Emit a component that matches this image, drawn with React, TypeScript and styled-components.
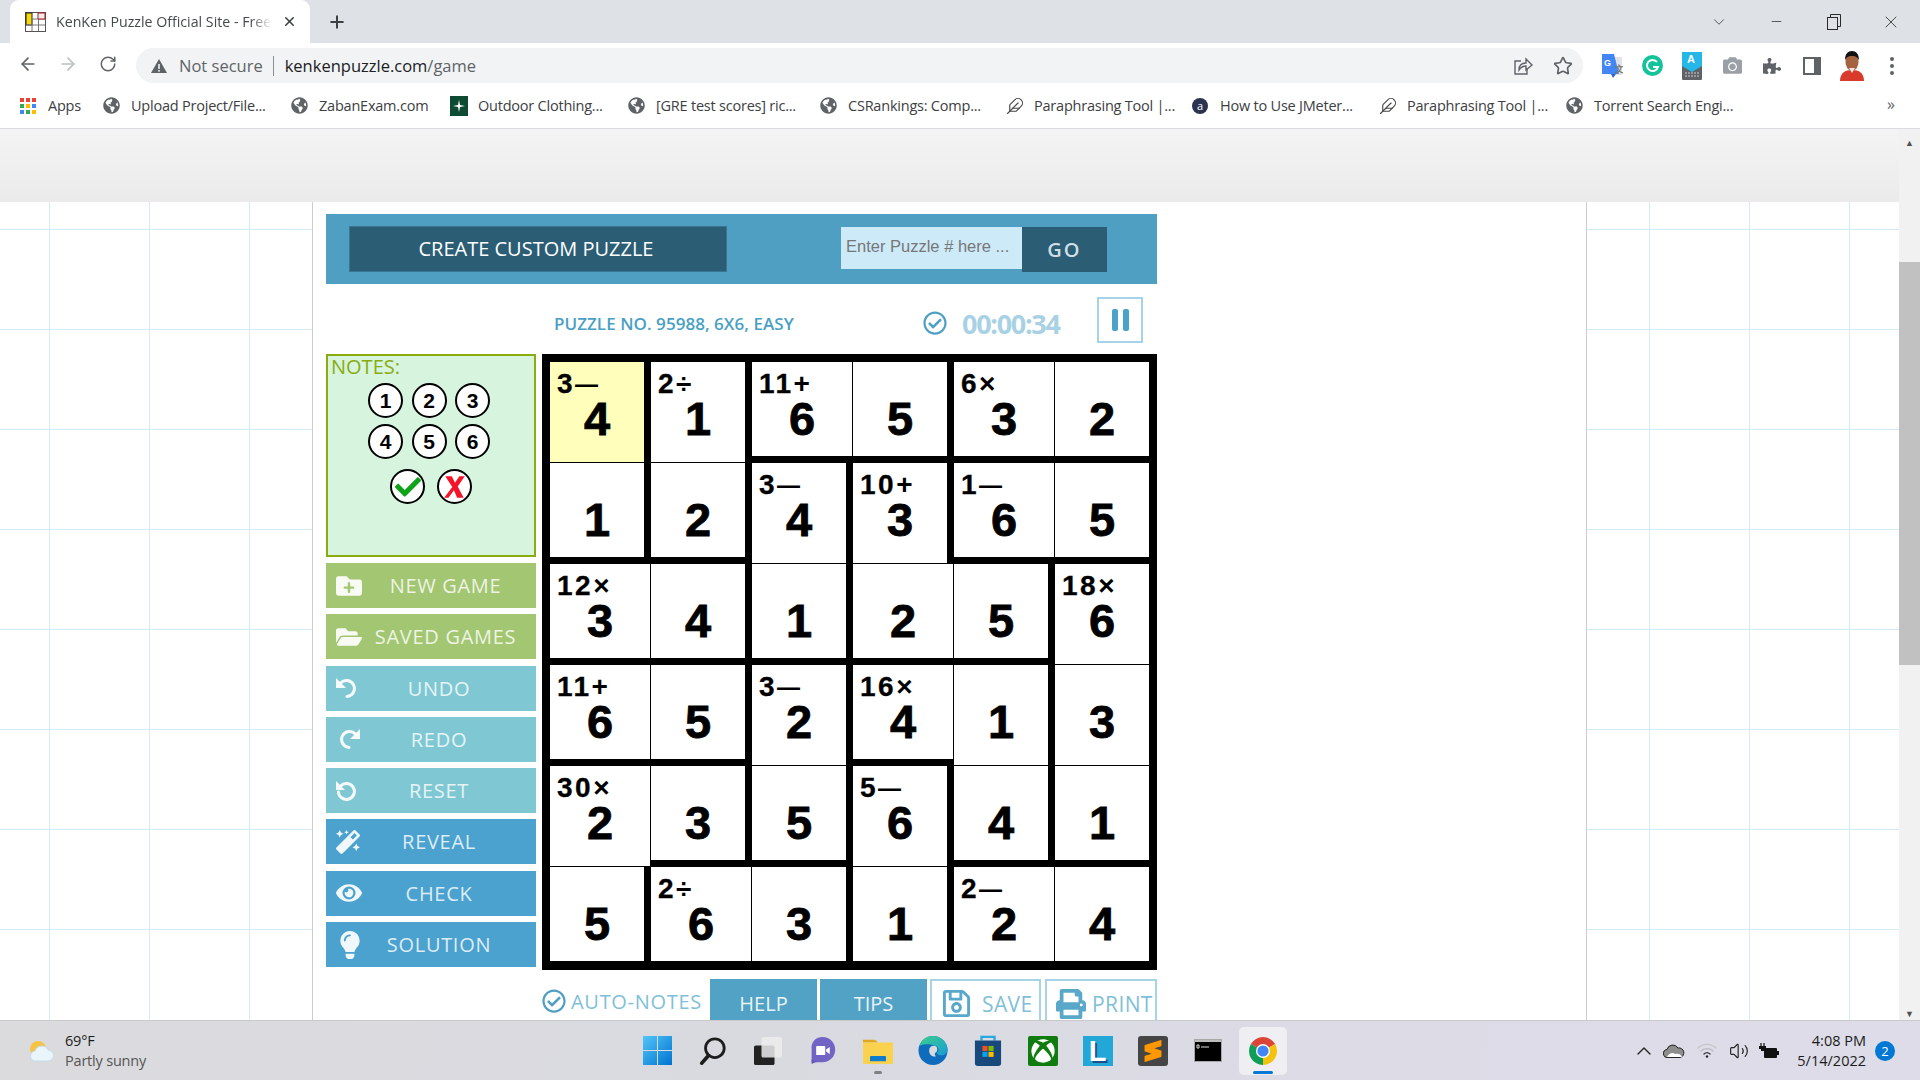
import React from "react";
import styled, { createGlobalStyle } from "styled-components";
import {
  FaCamera,
  FaCheck,
  FaEye,
  FaFolderOpen,
  FaFolderPlus,
  FaGlobeAmericas,
  FaLightbulb,
  FaMagic,
  FaPrint,
  FaPuzzlePiece,
  FaRegCheckCircle,
  FaRegSave,
  FaXbox,
} from "react-icons/fa";
import { SiSublimetext } from "react-icons/si";
import {
  ArrowLeft,
  ArrowRight,
  ChevronDown,
  ChevronUp,
  Feather,
  Minus,
  Plus,
  RotateCw,
  Star,
  Volume2,
  X,
} from "lucide-react";

const UI_FONT = `"Open Sans", "Noto Sans", sans-serif`;
const ARIAL = `"Liberation Sans", Arial, sans-serif`;

const GlobalStyle = createGlobalStyle`
  html, body {
    margin: 0;
    padding: 0;
    overflow: hidden;
    background: #fff;
  }
  * {
    box-sizing: border-box;
  }
`;

// each number is a cage, borders get thick where two cages meet
const cages = [
  [1, 2, 3, 3, 4, 4],
  [1, 2, 5, 6, 7, 7],
  [8, 8, 5, 6, 6, 9],
  [10, 10, 11, 12, 12, 9],
  [13, 13, 11, 14, 12, 9],
  [13, 15, 15, 14, 16, 16],
];

const values = [
  [4, 1, 6, 5, 3, 2],
  [1, 2, 4, 3, 6, 5],
  [3, 4, 1, 2, 5, 6],
  [6, 5, 2, 4, 1, 3],
  [2, 3, 5, 6, 4, 1],
  [5, 6, 3, 1, 2, 4],
];

const clues: Record<string, string> = {
  "0-0": "3—",
  "0-1": "2÷",
  "0-2": "11+",
  "0-4": "6×",
  "1-2": "3—",
  "1-3": "10+",
  "1-4": "1—",
  "2-0": "12×",
  "2-5": "18×",
  "3-0": "11+",
  "3-2": "3—",
  "3-3": "16×",
  "4-0": "30×",
  "4-3": "5—",
  "5-1": "2÷",
  "5-4": "2—",
};

const bookmarks = [
  { label: "Apps", icon: "apps", width: 83 },
  { label: "Upload Project/File...", icon: "globe", width: 188 },
  { label: "ZabanExam.com", icon: "globe", width: 159 },
  { label: "Outdoor Clothing...", icon: "outdoor", width: 178 },
  { label: "[GRE test scores] ric...", icon: "globe", width: 192 },
  { label: "CSRankings: Comp...", icon: "globe", width: 186 },
  { label: "Paraphrasing Tool |...", icon: "feather", width: 186 },
  { label: "How to Use JMeter...", icon: "dark", width: 187 },
  { label: "Paraphrasing Tool |...", icon: "feather", width: 187 },
  { label: "Torrent Search Engi...", icon: "globe", width: 187 },
];

const Page = styled.div`
  width: 1920px;
  height: 1080px;
  display: flex;
  flex-direction: column;
  overflow: hidden;
  font-family: ${UI_FONT};
`;

const TabStrip = styled.div`
  height: 43px;
  flex: none;
  background: #dee1e6;
  display: flex;
  align-items: center;
  padding-left: 10px;
`;

const Tab = styled.div`
  width: 300px;
  height: 43px;
  background: #fff;
  border-radius: 9px 9px 0 0;
  display: flex;
  align-items: center;
  padding-left: 15px;
  color: #45494d;
`;

const TabTitle = styled.span`
  width: 216px;
  margin-left: 10px;
  font-size: 14.2px;
  white-space: nowrap;
  overflow: hidden;
  -webkit-mask-image: linear-gradient(to right, #000 90%, transparent);
  mask-image: linear-gradient(to right, #000 90%, transparent);
`;

const TabClose = styled.span`
  display: flex;
  margin-left: 10px;
  color: #3c4043;
`;

const NewTab = styled.span`
  display: flex;
  margin-left: 17px;
  color: #3c4043;
`;

const WindowControls = styled.div`
  margin-left: auto;
  display: flex;
`;

const WindowButton = styled.span`
  width: 57.5px;
  height: 40px;
  display: flex;
  align-items: center;
  justify-content: center;
  color: #2a2a2a;
`;

const Toolbar = styled.div`
  height: 42px;
  flex: none;
  background: #fff;
  display: flex;
  align-items: center;
  padding-left: 8px;
`;

const NavButton = styled.span<{ $dim?: boolean }>`
  width: 40px;
  display: flex;
  justify-content: center;
  color: ${(p) => (p.$dim ? "#bcc0c4" : "#5f6368")};
`;

const Omnibox = styled.div`
  width: 1447px;
  height: 35px;
  margin: 3px 0 0 8px;
  border-radius: 18px;
  background: #f1f3f4;
  display: flex;
  align-items: center;
  padding-left: 14px;
  font-size: 16.5px;
`;

const NotSecure = styled.span`
  margin-left: 11px;
  color: #5f6368;
`;

const Divider = styled.span`
  width: 1px;
  height: 20px;
  margin: 0 11px 0 10px;
  background: #8a8d91;
`;

const UrlHost = styled.span`
  color: #202124;
`;

const UrlPath = styled.span`
  color: #5f6368;
`;

const OmniActions = styled.div`
  margin-left: auto;
  display: flex;
`;

const OmniAction = styled.span`
  width: 40px;
  display: flex;
  justify-content: center;
  color: #5f6368;
`;

const Extensions = styled.div`
  display: flex;
  margin: 3px 0 0 9px;
`;

const Extension = styled.span`
  width: 40px;
  height: 32px;
  display: flex;
  align-items: center;
  justify-content: center;
  color: #5f6368;
`;

const BookmarkBar = styled.div`
  height: 44px;
  flex: none;
  background: #fff;
  border-bottom: 1px solid #dadce0;
  display: flex;
  align-items: center;
  padding: 0 0 2px 20px;
`;

const Bookmark = styled.div<{ $w: number }>`
  width: ${(p) => p.$w}px;
  display: flex;
  align-items: center;
  font-size: 14.5px;
  letter-spacing: -0.22px;
  color: #3c4043;
  white-space: nowrap;
`;

const BookmarkIcon = styled.span`
  width: 28px;
  display: flex;
  color: #5f6368;
  flex: none;
`;

const More = styled.span`
  margin-left: 134px;
  margin-top: -4px;
  color: #5f6368;
  font-size: 16px;
`;

const Viewport = styled.div`
  flex: 1;
  display: flex;
  min-height: 0;
`;

const Site = styled.div`
  flex: 1;
  display: flex;
  flex-direction: column;
  min-width: 0;
`;

const HeaderBand = styled.div`
  height: 73px;
  flex: none;
  background: linear-gradient(#f4f4f4, #ebebeb);
`;

const Stage = styled.div`
  flex: 1;
  min-height: 0;
  overflow: hidden;
  padding-left: 312px;
  background-color: #fff;
  background-image: linear-gradient(to right, #d3ecf7 1.5px, transparent 1.5px),
    linear-gradient(to bottom, #d3ecf7 1.5px, transparent 1.5px);
  background-size: 100px 100px;
  background-position: 49px 27px;
`;

const Panel = styled.div`
  width: 1275px;
  height: 100%;
  background: #fff;
  border-left: 1px solid #ccc;
  border-right: 1px solid #ccc;
  padding: 12px 0 0 13px;
`;

const Game = styled.div`
  width: 831px;
`;

const TopBar = styled.div`
  height: 70px;
  background: #4e9fc1;
  display: flex;
  align-items: flex-start;
  padding: 12px 0 0 23px;
`;

const CreateButton = styled.button`
  width: 378px;
  height: 46px;
  background: #2b5d75;
  border: 1px solid #3a7592;
  color: #fff;
  font-family: ${UI_FONT};
  font-size: 20px;
  font-weight: 500;
  padding: 0 4px 2px 0;
`;

const PuzzleInput = styled.input`
  width: 181px;
  height: 42px;
  margin: 1px 0 0 114px;
  background: #cdeaf9;
  border: none;
  outline: none;
  padding: 0 0 3px 5px;
  font-family: ${ARIAL};
  font-size: 16.5px;
  &::placeholder {
    color: #777;
    opacity: 1;
  }
`;

const GoButton = styled.button`
  width: 85px;
  height: 45px;
  margin-top: 1px;
  background: #2b5d75;
  border: none;
  color: #cfdfe7;
  font-family: ${UI_FONT};
  font-size: 20px;
  font-weight: 600;
  letter-spacing: 2px;
  padding: 0;
`;

const InfoRow = styled.div`
  height: 70px;
  display: flex;
  align-items: center;
  padding: 8px 0 0 228px;
`;

const PuzzleName = styled.div`
  width: 239px;
  font-size: 17px;
  font-weight: 600;
  color: #4a9fc4;
  letter-spacing: 0.05px;
  white-space: nowrap;
`;

const TimerCheck = styled.span`
  display: flex;
  margin-left: 130px;
  color: #4f9fc4;
`;

const Timer = styled.div`
  margin-left: 15px;
  width: 98px;
  font-size: 27px;
  font-weight: 700;
  letter-spacing: -1.3px;
  white-space: nowrap;
  color: #a8d2e4;
`;

const PauseButton = styled.div`
  width: 46px;
  height: 46px;
  margin: -6px 0 0 37px;
  border: 2px solid #a7d3e6;
  display: flex;
  align-items: center;
  justify-content: center;
  gap: 5px;
`;

const PauseBar = styled.span`
  width: 6px;
  height: 22px;
  border-radius: 2px;
  background: #4ba2c8;
`;

const MainRow = styled.div`
  display: flex;
  gap: 6px;
`;

const SideColumn = styled.div`
  width: 210px;
  display: flex;
  flex-direction: column;
`;

const NotesBox = styled.div`
  height: 203px;
  background: #d6f4de;
  border: 2px solid #8aac0e;
  margin-bottom: 6px;
`;

const NotesTitle = styled.div`
  height: 26px;
  line-height: 22px;
  padding-left: 3px;
  font-size: 20px;
  color: #8aac0e;
`;

const NotesRow = styled.div<{ $gap: number; $top: number; $pad: number }>`
  display: flex;
  justify-content: center;
  gap: ${(p) => p.$gap}px;
  margin-top: ${(p) => p.$top}px;
  padding-right: ${(p) => p.$pad}px;
`;

const NoteCircle = styled.div`
  width: 35px;
  height: 35px;
  border-radius: 50%;
  border: 2px solid #000;
  background: #fff;
  display: flex;
  align-items: center;
  justify-content: center;
  font-family: ${ARIAL};
  font-size: 21px;
  font-weight: 700;
  color: #000;
`;

const ActionStack = styled.div`
  display: flex;
  flex-direction: column;
  gap: 6.3px;
`;

const ActionButton = styled.div<{ $bg: string; $right: number }>`
  height: 45px;
  background: ${(p) => p.$bg};
  display: flex;
  align-items: center;
  padding-right: ${(p) => p.$right}px;
  color: rgba(255, 255, 255, 0.82);
`;

const ActionIcon = styled.span`
  width: 46px;
  padding-left: 10px;
  display: flex;
  flex: none;
  color: rgba(255, 255, 255, 0.92);
`;

const ActionLabel = styled.span`
  flex: 1;
  text-align: center;
  font-size: 20px;
  letter-spacing: 0.7px;
  white-space: nowrap;
`;

const Board = styled.div`
  width: 615px;
  height: 616px;
  background: #000;
  padding: 8px 1px 2px 8px;
  display: grid;
  grid-template-columns: repeat(6, 101px);
  grid-template-rows: repeat(6, 101px);
`;

const Cell = styled.div<{ $right: boolean; $bottom: boolean; $selected: boolean }>`
  position: relative;
  background: ${(p) => (p.$selected ? "#ffffbb" : "#fff")};
  border-right: ${(p) => (p.$right ? 7 : 1)}px solid #000;
  border-bottom: ${(p) => (p.$bottom ? 7 : 1)}px solid #000;
  padding-top: 37px;
  text-align: center;
  font-family: ${ARIAL};
  font-weight: 700;
  color: #000;
`;

const CellValue = styled.div`
  font-size: 47px;
  line-height: 40px;
  -webkit-text-stroke: 0.8px #000;
`;

const CellClue = styled.span`
  position: absolute;
  left: 7px;
  top: 10px;
  display: flex;
  align-items: center;
  height: 24px;
  font-size: 28px;
  line-height: 24px;
  letter-spacing: 2.5px;
  white-space: nowrap;
  -webkit-text-stroke: 0.3px #000;
`;

const ClueOperator = styled.span<{ $dash: boolean }>`
  font-size: ${(p) => (p.$dash ? 23 : 28)}px;
  letter-spacing: 0;
  -webkit-text-stroke: 0;
`;

const BottomRow = styled.div`
  margin: 9px 0 0 216px;
  display: flex;
  align-items: flex-start;
`;

const AutoNotes = styled.div`
  width: 168px;
  height: 45px;
  flex: none;
  display: flex;
  align-items: center;
  color: #4f9fc4;
  padding-bottom: 1px;
`;

const AutoNotesText = styled.span`
  margin-left: 5px;
  font-size: 20px;
  letter-spacing: 0.7px;
  white-space: nowrap;
  color: #7fc0d8;
`;

const HelpButton = styled.div`
  width: 107px;
  height: 45px;
  flex: none;
  margin-right: 3px;
  background: #51a2c4;
  color: #e8f3f8;
  font-size: 20px;
  text-align: center;
  padding-top: 11px;
`;

const OutlineButton = styled.div<{ $w: number }>`
  width: ${(p) => p.$w}px;
  height: 45px;
  flex: none;
  margin-right: 4px;
  border: 2px solid #a7d3e6;
  display: flex;
  align-items: center;
  padding: 4px 0 0 9px;
  color: #5aa8c9;
  font-size: 21px;
`;

const OutlineLabel = styled.span<{ $gap: number }>`
  margin-left: ${(p) => p.$gap}px;
  color: #7fc0d8;
  letter-spacing: 0.4px;
`;

const Scrollbar = styled.div`
  width: 21px;
  flex: none;
  background: #f1f1f1;
  display: flex;
  flex-direction: column;
  align-items: center;
  padding-top: 9px;
  color: #505050;
  font-size: 9px;
  line-height: 9px;
`;

const ScrollThumb = styled.div`
  width: 100%;
  height: 403px;
  margin: 115px 0 344px;
  background: #c1c1c1;
`;

const Taskbar = styled.div`
  height: 60px;
  flex: none;
  display: flex;
  align-items: center;
  background: linear-gradient(100deg, #dbdbde, #d9dae0 40%, #dcdbe6 70%, #dddce8);
  border-top: 1px solid #c9c9cc;
  padding-left: 29px;
`;

const Weather = styled.div`
  width: 601px;
  flex: none;
  display: flex;
  align-items: center;
`;

const WeatherText = styled.div`
  margin-left: 10px;
  font-size: 14.5px;
  line-height: 20px;
  letter-spacing: -0.2px;
`;

const WeatherTemp = styled.div`
  color: #1c1c1c;
`;

const WeatherDesc = styled.div`
  color: #555;
`;

const TaskIcons = styled.div`
  display: flex;
  flex: none;
`;

const TaskSlot = styled.div<{ $active?: boolean }>`
  position: relative;
  width: ${(p) => (p.$active ? 48 : 55)}px;
  height: 48px;
  margin: ${(p) => (p.$active ? "0 3.5px" : "0")};
  display: flex;
  align-items: center;
  justify-content: center;
  border-radius: 5px;
  background: ${(p) => (p.$active ? "rgba(255,255,255,.55)" : "transparent")};
`;

const TaskMark = styled.span<{ $wide?: boolean }>`
  position: absolute;
  bottom: 1px;
  left: 50%;
  transform: translateX(-50%);
  width: ${(p) => (p.$wide ? 20 : 8)}px;
  height: 3px;
  border-radius: 2px;
  background: ${(p) => (p.$wide ? "#0078d4" : "#808080")};
`;

const LetterTile = styled.div`
  width: 30px;
  height: 30px;
  background: #22a7d6;
  color: #fff;
  font-family: ${ARIAL};
  font-size: 29px;
  font-weight: 700;
  line-height: 30px;
  text-align: center;
  text-shadow: 2px 2px 0 #1b4f8a;
`;

const SublimeTile = styled.div`
  width: 30px;
  height: 30px;
  background: #454545;
  border-radius: 3px;
  color: #ff9800;
  display: flex;
  align-items: center;
  justify-content: center;
`;

const XboxTile = styled.div`
  width: 30px;
  height: 30px;
  background: #107c10;
  border-radius: 2px;
  color: #fff;
  display: flex;
  align-items: center;
  justify-content: center;
`;

const Tray = styled.div`
  margin-left: 339px;
  display: flex;
  flex: none;
  align-items: center;
  color: #222;
`;

const TrayIcon = styled.span<{ $w: number }>`
  width: ${(p) => p.$w}px;
  display: flex;
  justify-content: center;
`;

const Clock = styled.div`
  width: 72px;
  margin-left: 10px;
  text-align: right;
  font-size: 14.5px;
  line-height: 20px;
  white-space: nowrap;
  color: #1c1c1c;
`;

const NotifyBadge = styled.div`
  width: 20px;
  height: 20px;
  margin-left: 9px;
  border-radius: 50%;
  background: #0078d4;
  color: #fff;
  font-size: 13px;
  line-height: 20px;
  text-align: center;
`;

const DarkDot = styled.span`
  width: 16px;
  height: 16px;
  border-radius: 50%;
  background: #2b3350;
  color: #fff;
  font-size: 11px;
  line-height: 15px;
  text-align: center;
`;

const Favicon = () => (
  <svg width="21" height="20" viewBox="0 0 21 20">
    <rect x="0.5" y="0.5" width="20" height="19" fill="#fff" stroke="#555" />
    <rect x="1" y="1" width="6" height="12" fill="#f5d90a" stroke="#222" />
    <path d="M7 7h13M7 13h13M1 13h6M13.5 7v12M7 7v12" stroke="#777" fill="none" />
    <path d="M13 1v6h7V1z" fill="#fbeaea" stroke="#a02020" />
  </svg>
);

const AppsIcon = () => (
  <svg width="16" height="16" viewBox="0 0 16 16">
    {["#ea4335", "#ea4335", "#ea4335", "#34a853", "#fbbc04", "#4285f4", "#4285f4", "#34a853", "#fbbc04"].map((c, i) => (
      <rect key={i} x={(i % 3) * 6} y={Math.floor(i / 3) * 6} width="4" height="4" fill={c} />
    ))}
  </svg>
);

const OutdoorIcon = () => (
  <svg width="18" height="20" viewBox="0 0 18 20">
    <rect width="18" height="20" fill="#0f4a33" />
    <path d="M9 4l1 5 5 1-5 1-1 5-1-5-5-1 5-1z" fill="#fff" />
  </svg>
);

const WarningIcon = () => (
  <svg width="18" height="16" viewBox="0 0 18 16">
    <path d="M9 1l8 14H1z" fill="#5f6368" />
    <rect x="8.2" y="6" width="1.6" height="5" fill="#f1f3f4" />
    <rect x="8.2" y="12" width="1.6" height="1.6" fill="#f1f3f4" />
  </svg>
);

const ShareIcon = () => (
  <svg width="20" height="20" viewBox="0 0 20 20" fill="none" stroke="#5f6368" strokeWidth="1.4">
    <path d="M8 5H2v13h12v-5" />
    <path d="M6 14c0-5 3-7 7-7V3l6 6-6 5v-4c-3 0-5 1-7 4z" />
  </svg>
);

const TranslateIcon = () => (
  <svg width="22" height="26" viewBox="0 0 22 26">
    <path d="M8 4h13v18H8z" fill="#e1e3e6" />
    <path d="M1 1h12l5 20H1z" fill="#4285f4" />
    <path d="M10 21h5l-3 4z" fill="#3367c5" />
    <text x="3" y="13" fontSize="9" fontWeight="700" fill="#fff" fontFamily={ARIAL}>G</text>
    <text x="14" y="19" fontSize="9" fontWeight="700" fill="#777" fontFamily={ARIAL}>文</text>
  </svg>
);

const GrammarlyIcon = () => (
  <svg width="21" height="21" viewBox="0 0 21 21">
    <circle cx="10.5" cy="10.5" r="10.5" fill="#15c39a" />
    <path d="M15 7a5.6 5.6 0 1 0 1 5h-5" fill="none" stroke="#fff" strokeWidth="2" />
  </svg>
);

const KeyboardIcon = () => (
  <svg width="20" height="28" viewBox="0 0 20 28">
    <rect y="13" width="20" height="15" rx="1" fill="#5f6368" />
    <path d="M0 0h20v14l-10 6L0 14z" fill="#26b6e8" />
    <text x="5" y="11" fontSize="11" fontWeight="700" fill="#fff" fontFamily={ARIAL}>A</text>
    <path d="M3 21h14M3 24h14" stroke="#ccc" strokeDasharray="2 1" />
  </svg>
);

const SidePanelIcon = () => (
  <svg width="18" height="18" viewBox="0 0 18 18">
    <rect width="18" height="18" fill="#5f6368" />
    <rect x="2" y="2" width="9" height="14" fill="#fff" />
  </svg>
);

const Avatar = () => (
  <svg width="26" height="30" viewBox="0 0 26 30">
    <path d="M1 30c0-8 5-11 12-11s12 3 12 11z" fill="#d83a2c" />
    <ellipse cx="13" cy="11" rx="6.5" ry="9" fill="#a5643f" />
    <path d="M6 9c0-6 3-9 7-9s7 3 7 9c-2-3-3-4-7-4s-5 1-7 4z" fill="#111" />
    <path d="M10 17h6l-3 5z" fill="#f0e6df" />
  </svg>
);

const KebabIcon = () => (
  <svg width="4" height="18" viewBox="0 0 4 18" fill="#5f6368">
    <circle cx="2" cy="2" r="2" />
    <circle cx="2" cy="9" r="2" />
    <circle cx="2" cy="16" r="2" />
  </svg>
);

const RestoreIcon = () => (
  <svg width="14" height="16" viewBox="0 0 14 16" fill="none" stroke="#2a2a2a">
    <rect x="0.5" y="3.5" width="10" height="12" />
    <path d="M3.5 3.5v-3h10v12h-3" />
  </svg>
);

const UndoIcon = () => (
  <svg width="20" height="20" viewBox="0 0 20 20" fill="none">
    <path d="M0 0v10h10z" fill="currentColor" />
    <path d="M4.5 5A8 8 0 1 1 11 18.4" stroke="currentColor" strokeWidth="3" strokeLinecap="round" />
  </svg>
);

const RedoIcon = () => (
  <svg width="24" height="20" viewBox="0 0 24 20" fill="none">
    <path d="M24 0v10H14z" fill="currentColor" />
    <path d="M19.5 5A8 8 0 1 0 13 18.4" stroke="currentColor" strokeWidth="3" strokeLinecap="round" />
  </svg>
);

const ResetIcon = () => (
  <svg width="20" height="22" viewBox="0 0 20 22" fill="none">
    <path d="M0 1v9h9z" fill="currentColor" />
    <path d="M4.5 6A8 8 0 1 1 2.4 12" stroke="currentColor" strokeWidth="3" strokeLinecap="round" />
  </svg>
);

const CrossIcon = () => (
  <svg width="26" height="26" viewBox="0 0 24 24">
    <path d="M3 2h6l3 6 4-6h5l-6.5 9.5 5.5 10.5h-6l-3-7-5 7H2l7.5-10z" fill="#f5132a" />
  </svg>
);

const WeatherIcon = () => (
  <svg width="26" height="22" viewBox="0 0 26 22">
    <circle cx="9" cy="9" r="8" fill="#f6c345" />
    <path d="M7 21a5 5 0 0 1-1-10 7 7 0 0 1 13-1 5.5 5.5 0 0 1 0 11z" fill="#eaf4fb" stroke="#c4dcec" />
  </svg>
);

const WinLogo = () => (
  <svg width="29" height="29" viewBox="0 0 29 29">
    <defs>
      <linearGradient id="wl" x1="0" y1="0" x2="1" y2="1">
        <stop offset="0" stopColor="#52c6f7" />
        <stop offset="1" stopColor="#0073d1" />
      </linearGradient>
    </defs>
    <path d="M0 0h14v14H0zM15 0h14v14H15zM0 15h14v14H0zM15 15h14v14H15z" fill="url(#wl)" />
  </svg>
);

const SearchLogo = () => (
  <svg width="28" height="28" viewBox="0 0 28 30" fill="none" stroke="#1d1d1d">
    <circle cx="16" cy="12" r="10" strokeWidth="3" />
    <path d="M9 20l-7 8" strokeWidth="4" strokeLinecap="round" />
  </svg>
);

const TaskViewLogo = () => (
  <svg width="30" height="28" viewBox="0 0 30 30">
    <rect x="0" y="9" width="22" height="21" rx="2" fill="#222" />
    <rect x="8" y="0" width="22" height="22" rx="2" fill="#ececec" fillOpacity="0.85" />
  </svg>
);

const TeamsLogo = () => (
  <svg width="29" height="29" viewBox="0 0 30 32">
    <path d="M15 1c8 0 14 6 14 14s-6 14-14 14H3v-14C2 7 7 1 15 1z" fill="#7264c4" />
    <path d="M3 26v5l6-3z" fill="#6657b8" />
    <rect x="8" y="11" width="10" height="10" rx="1" fill="#fff" />
    <path d="M19 15l4-3v8l-4-3z" fill="#fff" />
  </svg>
);

const ExplorerLogo = () => (
  <svg width="30" height="27" viewBox="0 0 30 30" preserveAspectRatio="none">
    <path d="M0 3h12l3 3h-15z" fill="#e0a820" />
    <rect y="6" width="30" height="24" rx="1" fill="#fbd24e" />
    <rect x="7" y="21" width="16" height="6" rx="1" fill="#0e7ccc" />
  </svg>
);

const EdgeLogo = () => (
  <svg width="30" height="31" viewBox="0 0 30 32">
    <defs>
      <linearGradient id="eg" x1="0" y1="0" x2="1" y2="1">
        <stop offset="0" stopColor="#3bd18a" />
        <stop offset="1" stopColor="#1a9ad6" />
      </linearGradient>
    </defs>
    <circle cx="15" cy="16" r="15" fill="#0f6cbd" />
    <path d="M1 12C3 4 9 1 15 1c9 0 15 7 15 14 0 3-2 6-6 6-3 0-5-1-5-3 3-1 2-6-2-7C10 9 3 9 1 12z" fill="url(#eg)" />
    <path d="M11 16c0-3 2-5 5-5s4 3 3 6c-2 1-3 3-1 5-4 1-7-2-7-6z" fill="#d9dae0" />
  </svg>
);

const StoreLogo = () => (
  <svg width="28" height="31" viewBox="0 0 30 34" preserveAspectRatio="none">
    <path d="M8 6V2h14v4" fill="none" stroke="#29a8e0" strokeWidth="2.5" />
    <path d="M1 6h28v25a3 3 0 0 1-3 3H4a3 3 0 0 1-3-3z" fill="#18497d" />
    <rect x="9" y="12" width="5.5" height="5.5" fill="#f25022" />
    <rect x="15.5" y="12" width="5.5" height="5.5" fill="#7fba00" />
    <rect x="9" y="18.5" width="5.5" height="5.5" fill="#00a4ef" />
    <rect x="15.5" y="18.5" width="5.5" height="5.5" fill="#ffb900" />
  </svg>
);

const TerminalLogo = () => (
  <svg width="28" height="23" viewBox="0 0 28 23">
    <rect x="0.5" y="0.5" width="27" height="22" fill="#000" stroke="#a8a8a8" />
    <rect x="1" y="1" width="26" height="2" fill="#bdbdbd" />
    <path d="M3 6h2v3H3zM7 8h8" stroke="#ddd" fill="none" />
  </svg>
);

const ChromeLogo = () => (
  <svg width="28" height="28" viewBox="4 4 40 40">
    <path d="M24 24L6.68 14A20 20 0 0 1 41.32 14Z" fill="#db4437" />
    <path d="M24 24L41.32 14A20 20 0 0 1 24 44Z" fill="#f4c20d" />
    <path d="M24 24L24 44A20 20 0 0 1 6.68 14Z" fill="#0f9d58" />
    <circle cx="24" cy="24" r="10" fill="#fff" />
    <circle cx="24" cy="24" r="8" fill="#4285f4" />
  </svg>
);

const OneDriveIcon = () => (
  <svg width="22" height="14" viewBox="0 0 22 14">
    <path d="M5 13.5a4 4 0 0 1-1-8 6 6 0 0 1 11-1.5 4.8 4.8 0 0 1 2 9.5z" fill="#8d8d8d" stroke="#222" />
    <path d="M4 13c2-4 6-5 8-3 3-1 6 0 7 3z" fill="#fff" />
  </svg>
);

const WifiIcon = () => (
  <svg width="20" height="15" viewBox="0 0 20 15" fill="none" strokeWidth="1.3" strokeLinecap="round">
    <path d="M1 5a13 13 0 0 1 18 0" stroke="#c4c4c8" />
    <path d="M4 8a9 9 0 0 1 12 0" stroke="#bcbcc0" />
    <path d="M7 11a4.5 4.5 0 0 1 6 0" stroke="#333" />
    <circle cx="10" cy="13.5" r="1.2" fill="#222" />
  </svg>
);

const BatteryIcon = () => (
  <svg width="20" height="16" viewBox="0 0 20 16" fill="#111">
    <path d="M2 0v3M5 0v3" stroke="#111" strokeWidth="1.2" />
    <path d="M0 3h7v3H5v2H2V6H0z" />
    <rect x="5" y="5" width="13" height="10" rx="1" />
    <rect x="18" y="8" width="2" height="4" />
  </svg>
);

function bookmarkIcon(kind: string) {
  if (kind === "apps") return <AppsIcon />;
  if (kind === "outdoor") return <OutdoorIcon />;
  if (kind === "feather") return <Feather size={18} color="#444" strokeWidth={1.5} />;
  if (kind === "dark") return <DarkDot>a</DarkDot>;
  return <FaGlobeAmericas size={17} />;
}

const KenKenGame: React.FC = () => {
  const sideActions = [
    { label: "NEW GAME", bg: "#a3c672", right: 17, icon: <FaFolderPlus size={26} /> },
    { label: "SAVED GAMES", bg: "#a3c672", right: 17, icon: <FaFolderOpen size={26} /> },
    { label: "UNDO", bg: "#7fc8d3", right: 30, icon: <UndoIcon /> },
    { label: "REDO", bg: "#7fc8d3", right: 30, icon: <RedoIcon /> },
    { label: "RESET", bg: "#7fc8d3", right: 30, icon: <ResetIcon /> },
    { label: "REVEAL", bg: "#4ba2cf", right: 30, icon: <FaMagic size={24} /> },
    { label: "CHECK", bg: "#4ba2cf", right: 30, icon: <FaEye size={26} /> },
    { label: "SOLUTION", bg: "#4ba2cf", right: 30, icon: <FaLightbulb size={28} /> },
  ];

  return (
    <Game>
      <TopBar>
        <CreateButton>CREATE CUSTOM PUZZLE</CreateButton>
        <PuzzleInput placeholder="Enter Puzzle # here ..." />
        <GoButton>GO</GoButton>
      </TopBar>
      <InfoRow>
        <PuzzleName>PUZZLE NO. 95988, 6X6, EASY</PuzzleName>
        <TimerCheck>
          <FaRegCheckCircle size={24} />
        </TimerCheck>
        <Timer>00:00:34</Timer>
        <PauseButton>
          <PauseBar />
          <PauseBar />
        </PauseButton>
      </InfoRow>
      <MainRow>
        <SideColumn>
          <NotesBox>
            <NotesTitle>NOTES:</NotesTitle>
            <NotesRow $gap={8.5} $top={1} $pad={4}>
              {[1, 2, 3].map((n) => (
                <NoteCircle key={n}>{n}</NoteCircle>
              ))}
            </NotesRow>
            <NotesRow $gap={8.5} $top={6} $pad={4}>
              {[4, 5, 6].map((n) => (
                <NoteCircle key={n}>{n}</NoteCircle>
              ))}
            </NotesRow>
            <NotesRow $gap={12} $top={10} $pad={0}>
              <NoteCircle>
                <FaCheck size={26} color="#0fa31a" />
              </NoteCircle>
              <NoteCircle>
                <CrossIcon />
              </NoteCircle>
            </NotesRow>
          </NotesBox>
          <ActionStack>
            {sideActions.map((a) => (
              <ActionButton key={a.label} $bg={a.bg} $right={a.right}>
                <ActionIcon>{a.icon}</ActionIcon>
                <ActionLabel>{a.label}</ActionLabel>
              </ActionButton>
            ))}
          </ActionStack>
        </SideColumn>
        <Board>
          {values.map((row, r) =>
            row.map((v, c) => {
              const clue = clues[`${r}-${c}`];
              return (
                <Cell
                  key={`${r}-${c}`}
                  $right={c === 5 || cages[r][c] !== cages[r][c + 1]}
                  $bottom={r === 5 || cages[r][c] !== cages[r + 1][c]}
                  $selected={r === 0 && c === 0}
                >
                  {clue && (
                    <CellClue>
                      {clue.slice(0, -1)}
                      <ClueOperator $dash={clue.endsWith("—")}>{clue.slice(-1)}</ClueOperator>
                    </CellClue>
                  )}
                  <CellValue>{v}</CellValue>
                </Cell>
              );
            })
          )}
        </Board>
      </MainRow>
      <BottomRow>
        <AutoNotes>
          <FaRegCheckCircle size={24} />
          <AutoNotesText>AUTO-NOTES</AutoNotesText>
        </AutoNotes>
        <HelpButton>HELP</HelpButton>
        <HelpButton>TIPS</HelpButton>
        <OutlineButton $w={111}>
          <FaRegSave size={31} />
          <OutlineLabel $gap={10}>SAVE</OutlineLabel>
        </OutlineButton>
        <OutlineButton $w={112}>
          <FaPrint size={30} />
          <OutlineLabel $gap={6}>PRINT</OutlineLabel>
        </OutlineButton>
      </BottomRow>
    </Game>
  );
};

const App: React.FC = () => {
  return (
    <>
      <GlobalStyle />
      <Page>
        <TabStrip>
          <Tab>
            <Favicon />
            <TabTitle>KenKen Puzzle Official Site - Free</TabTitle>
            <TabClose>
              <X size={15} strokeWidth={2.5} />
            </TabClose>
          </Tab>
          <NewTab>
            <Plus size={20} strokeWidth={2.4} />
          </NewTab>
          <WindowControls>
            <WindowButton>
              <ChevronDown size={18} strokeWidth={1} />
            </WindowButton>
            <WindowButton>
              <Minus size={15} strokeWidth={1.2} />
            </WindowButton>
            <WindowButton>
              <RestoreIcon />
            </WindowButton>
            <WindowButton>
              <X size={20} strokeWidth={1} />
            </WindowButton>
          </WindowControls>
        </TabStrip>
        <Toolbar>
          <NavButton>
            <ArrowLeft size={20} />
          </NavButton>
          <NavButton $dim>
            <ArrowRight size={20} />
          </NavButton>
          <NavButton>
            <RotateCw size={18} />
          </NavButton>
          <Omnibox>
            <WarningIcon />
            <NotSecure>Not secure</NotSecure>
            <Divider />
            <UrlHost>kenkenpuzzle.com</UrlHost>
            <UrlPath>/game</UrlPath>
            <OmniActions>
              <OmniAction>
                <ShareIcon />
              </OmniAction>
              <OmniAction>
                <Star size={20} strokeWidth={2} />
              </OmniAction>
            </OmniActions>
          </Omnibox>
          <Extensions>
            <Extension>
              <TranslateIcon />
            </Extension>
            <Extension>
              <GrammarlyIcon />
            </Extension>
            <Extension>
              <KeyboardIcon />
            </Extension>
            <Extension>
              <FaCamera size={19} color="#9aa0a6" />
            </Extension>
            <Extension>
              <FaPuzzlePiece size={18} />
            </Extension>
            <Extension>
              <SidePanelIcon />
            </Extension>
            <Extension>
              <Avatar />
            </Extension>
            <Extension>
              <KebabIcon />
            </Extension>
          </Extensions>
        </Toolbar>
        <BookmarkBar>
          {bookmarks.map((b, i) => (
            <Bookmark key={i} $w={b.width}>
              <BookmarkIcon>{bookmarkIcon(b.icon)}</BookmarkIcon>
              {b.label}
            </Bookmark>
          ))}
          <More>»</More>
        </BookmarkBar>
        <Viewport>
          <Site>
            <HeaderBand />
            <Stage>
              <Panel>
                <KenKenGame />
              </Panel>
            </Stage>
          </Site>
          <Scrollbar>
            ▲
            <ScrollThumb />
            ▼
          </Scrollbar>
        </Viewport>
        <Taskbar>
          <Weather>
            <WeatherIcon />
            <WeatherText>
              <WeatherTemp>69°F</WeatherTemp>
              <WeatherDesc>Partly sunny</WeatherDesc>
            </WeatherText>
          </Weather>
          <TaskIcons>
            <TaskSlot>
              <WinLogo />
            </TaskSlot>
            <TaskSlot>
              <SearchLogo />
            </TaskSlot>
            <TaskSlot>
              <TaskViewLogo />
            </TaskSlot>
            <TaskSlot>
              <TeamsLogo />
            </TaskSlot>
            <TaskSlot>
              <ExplorerLogo />
              <TaskMark />
            </TaskSlot>
            <TaskSlot>
              <EdgeLogo />
            </TaskSlot>
            <TaskSlot>
              <StoreLogo />
            </TaskSlot>
            <TaskSlot>
              <XboxTile>
                <FaXbox size={24} />
              </XboxTile>
            </TaskSlot>
            <TaskSlot>
              <LetterTile>L</LetterTile>
            </TaskSlot>
            <TaskSlot>
              <SublimeTile>
                <SiSublimetext size={22} />
              </SublimeTile>
            </TaskSlot>
            <TaskSlot>
              <TerminalLogo />
            </TaskSlot>
            <TaskSlot $active>
              <ChromeLogo />
              <TaskMark $wide />
            </TaskSlot>
          </TaskIcons>
          <Tray>
            <TrayIcon $w={30}>
              <ChevronUp size={24} strokeWidth={1.4} />
            </TrayIcon>
            <TrayIcon $w={30}>
              <OneDriveIcon />
            </TrayIcon>
            <TrayIcon $w={35}>
              <WifiIcon />
            </TrayIcon>
            <TrayIcon $w={30}>
              <Volume2 size={20} strokeWidth={1.4} />
            </TrayIcon>
            <TrayIcon $w={30}>
              <BatteryIcon />
            </TrayIcon>
            <Clock>
              <div>4:08 PM</div>
              <div>5/14/2022</div>
            </Clock>
            <NotifyBadge>2</NotifyBadge>
          </Tray>
        </Taskbar>
      </Page>
    </>
  );
};

export default App;
